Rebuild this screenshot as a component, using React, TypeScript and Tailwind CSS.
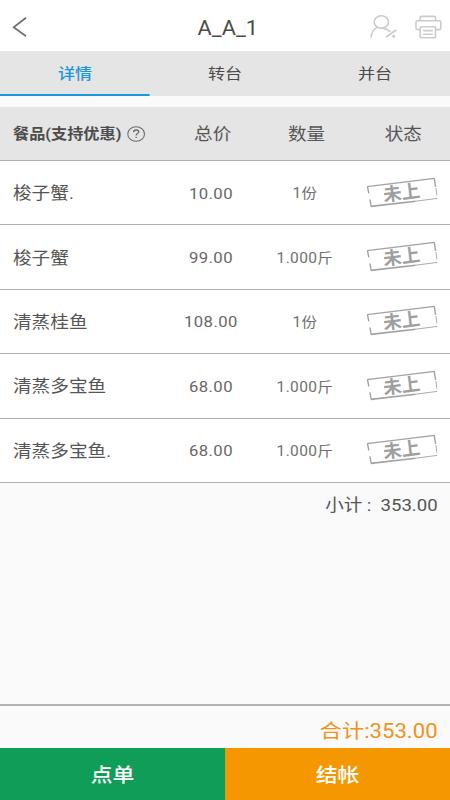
import React, { useState } from 'react';

interface OrderItem {
  name: string;
  price: string;
  amount: string;
}

const items: OrderItem[] = [
  { name: '梭子蟹.', price: '10.00', amount: '1份' },
  { name: '梭子蟹', price: '99.00', amount: '1.000斤' },
  { name: '清蒸桂鱼', price: '108.00', amount: '1份' },
  { name: '清蒸多宝鱼', price: '68.00', amount: '1.000斤' },
  { name: '清蒸多宝鱼.', price: '68.00', amount: '1.000斤' },
];

const tabs = ['详情', '转台', '并台'];

const BackIcon = () => (
  <svg className="w-[14px] h-[20px]" viewBox="0 0 15.75 20" preserveAspectRatio="none" fill="none" stroke="#6f6f6f" strokeWidth="1.7">
    <path d="M14.8 0.8 2.4 10.2 14.8 19.2" />
  </svg>
);

const MemberIcon = () => (
  <svg className="w-[24px] h-[24px]" viewBox="0 0 27 24" preserveAspectRatio="none" fill="none" stroke="#cbcbcb" strokeWidth="1.6">
    <ellipse cx="11.2" cy="7" rx="7.2" ry="6.2" />
    <path d="M0.8 22.8C1.1 17.8 3.2 14.2 7 12.4M11.2 13.2C15 13.2 18 14.6 20.4 17" />
    <path d="M16 22 26 15" />
    <circle cx="23.6" cy="21.2" r="0.7" fill="#cbcbcb" />
  </svg>
);

const PrinterIcon = () => (
  <svg className="w-[24px] h-[24px]" viewBox="0 0 27 24" preserveAspectRatio="none" fill="none" stroke="#cbcbcb" strokeWidth="1.6">
    <path d="M5 5.8V2.6a1.4 1.2 0 0 1 1.4-1.2H19a1.4 1.2 0 0 1 1.4 1.2V5.8" />
    <path d="M5 14.6H2.4a1.6 1.6 0 0 1-1.6-1.6V7.4a1.6 1.6 0 0 1 1.6-1.6H24.1a1.6 1.6 0 0 1 1.6 1.6V13a1.6 1.6 0 0 1-1.6 1.6H20.4" />
    <rect x="5" y="11.8" width="15.4" height="11" rx="1" />
    <path d="M8 15.6H17.6M8 19.2H17.6" />
  </svg>
);

const HelpIcon = () => (
  <svg className="w-[16px] h-[16px]" viewBox="0 0 18 16" preserveAspectRatio="none" fill="none" stroke="#6a6a6a" strokeWidth="1.1">
    <ellipse cx="9" cy="8" rx="8.4" ry="7.2" />
    <path d="M6.4 6.2C6.5 4.8 7.5 4 9 4S11.6 4.8 11.6 6C11.6 7.6 9 7.6 9 9.5" strokeWidth="1.3" />
    <path d="M9 10.7V12" strokeWidth="1.3" />
  </svg>
);

// "Not served yet" stamp
const Stamp = () => (
  <svg className="w-[64px] h-[32px]" viewBox="0 0 72 32" preserveAspectRatio="none" fill="none" stroke="#a2a2a2">
    <path d="M1.6 9.6 68.8 1.4" strokeWidth="1.3" />
    <path d="M1.8 9.4 3.2 16.4M4.2 22.4 5.6 29.4" strokeWidth="1.4" />
    <path d="M68.6 1.4 70 10" strokeWidth="1.4" />
    <path d="M70.2 11 71.4 18.8" strokeWidth="0.9" />
    <path d="M5.2 29.4 50 24.2" strokeWidth="1.6" />
    <path d="M50 24.2 71.6 21.4" strokeWidth="0.9" />
    <text
      x="36"
      y="22.2"
      textAnchor="middle"
      transform="rotate(-7 36 16)"
      fill="#9f9f9f"
      stroke="none"
      className="text-[18.5px] font-bold"
    >
      未上
    </text>
  </svg>
);

const App = () => {
  const [activeTab, setActiveTab] = useState('详情');

  return (
    <div className="w-[450px] h-[800px] overflow-hidden bg-[#fafafa]">
      {/* The screen is 400 wide and gets widened to fill the viewport */}
      <div className="flex flex-col w-[400px] h-[800px] origin-top-left scale-x-[1.125] bg-[#fafafa] text-[#555] font-[Roboto,'Noto_Sans_CJK_SC',sans-serif]">
        {/* Header */}
        <header className="flex items-center h-[51px] shrink-0 bg-white pl-[10px] pr-[7px] pt-[3px]">
          <div className="flex-1">
            <BackIcon />
          </div>
          <h1 className="text-[19.4px] leading-6 text-[#4a4a4a] pl-[2px] pt-[4px]">A_A_1</h1>
          <div className="flex flex-1 justify-end gap-[16px]">
            <MemberIcon />
            <PrinterIcon />
          </div>
        </header>

        {/* Tabs */}
        <nav className="grid grid-cols-3 h-[45px] shrink-0 bg-[#e5e5e5]">
          {tabs.map((tab) => (
            <button
              key={tab}
              onClick={() => setActiveTab(tab)}
              className={`border-b-2 pt-[4px] text-[15.2px] ${
                activeTab === tab ? 'border-[#1b97dd] text-[#1b97dd] font-medium' : 'border-transparent text-[#4a4a4a]'
              }`}
            >
              {tab}
            </button>
          ))}
        </nav>

        {/* Order table */}
        <div className="mt-[11px] shrink-0">
          <div className="grid grid-cols-[148px_82px_85px_85px] items-center h-[54px] pt-[3px] bg-[#e5e5e5] border-b border-[#b0b0b0] text-[16.5px] text-center">
            <div className="flex items-center gap-[5px] pl-[11.5px] text-[14.4px] font-bold text-[#4c4c4c] whitespace-nowrap">
              餐品(支持优惠)
              <div className="pb-[2px]">
                <HelpIcon />
              </div>
            </div>
            <div>总价</div>
            <div>数量</div>
            <div className="pl-[2px]">状态</div>
          </div>
          {items.map((item) => (
            <div
              key={item.name}
              className="grid grid-cols-[148px_79px_87px_86px] items-center h-[64.4px] bg-white border-b border-[#b0b0b0] text-center"
            >
              <div className="pl-[11.5px] pt-[4px] text-left text-[16.6px]">{item.name}</div>
              <div className="pt-[2px] text-[14.8px] tracking-[0.4px] text-[#666]">{item.price}</div>
              <div className="pt-[2px] pl-[1px] text-[13.8px] tracking-[0.3px] text-[#707070]">{item.amount}</div>
              <div className="flex justify-center">
                <Stamp />
              </div>
            </div>
          ))}
        </div>

        <div className="pr-[11px] pt-[11px] text-right text-[16.5px] leading-6 whitespace-pre">小计 :  353.00</div>

        {/* Total and actions */}
        <footer className="mt-auto">
          <div className="flex items-center justify-end h-[44px] pt-[9px] pr-[11px] border-t-2 border-[#b4b4b4] text-[19.7px] text-[#f0931a]">
            合计:353.00
          </div>
          <div className="grid grid-cols-2 h-[52px] text-[19.4px] font-medium text-white">
            <button className="pt-[3px] bg-[#109d58]">点单</button>
            <button className="pt-[3px] bg-[#f59700]">结帐</button>
          </div>
        </footer>
      </div>
    </div>
  );
};

export default App;
